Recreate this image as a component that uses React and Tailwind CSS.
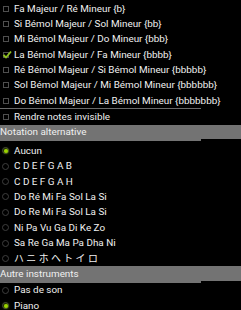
import React from 'react';

const keys = [
  { label: 'Fa Majeur / Ré Mineur {b}' },
  { label: 'Si Bémol Majeur / Sol Mineur {bb}' },
  { label: 'Mi Bémol Majeur / Do Mineur {bbb}' },
  { label: 'La Bémol Majeur / Fa Mineur {bbbb}', checked: true },
  { label: 'Ré Bémol Majeur / Si Bémol Mineur {bbbbb}' },
  { label: 'Sol Bémol Majeur / Mi Bémol Mineur {bbbbbb}' },
  { label: 'Do Bémol Majeur / La Bémol Mineur {bbbbbbb}' },
];

const notations = [
  { label: 'Aucun', selected: true },
  { label: 'C D E F G A B' },
  { label: 'C D E F G A H' },
  { label: 'Do Ré Mi Fa Sol La Si' },
  { label: 'Do Re Mi Fa Sol La Si' },
  { label: 'Ni Pa Vu Ga Di Ke Zo' },
  { label: 'Sa Re Ga Ma Pa Dha Ni' },
  { label: 'ハ ニ ホ ヘ ト イ ロ' },
];

const instruments = [
  { label: 'Pas de son' },
  { label: 'Piano', selected: true },
];

// petite case à cocher
const CheckRow = ({ label, checked }) => (
  <div className="flex items-center h-[15.33px]">
    <div className="relative w-[14px] h-full flex items-center">
      <div className="ml-[3px] w-[6px] h-[6px] border border-[#4f4f4f]" />
      {checked && (
        <svg className="absolute left-[2px] top-[3px]" width="10" height="9" viewBox="0 0 10 9">
          <path d="M1.5 5 L4 7.5 L9 1.5" stroke="#8fc31f" strokeWidth="1.8" fill="none" />
        </svg>
      )}
    </div>
    <span className="whitespace-nowrap">{label}</span>
  </div>
);

const RadioRow = ({ label, selected }) => (
  <div className="flex items-center h-[15.4px]">
    <div className="w-[14px] h-full flex items-center">
      <div className="ml-[2px] w-[7px] h-[7px] rounded-full border border-[#3f3f3f] flex items-center justify-center">
        {selected && <div className="w-[4px] h-[4px] rounded-full bg-[#9bd400] shadow-[0_0_3px_#9bd400]" />}
      </div>
    </div>
    <span className="whitespace-nowrap">{label}</span>
  </div>
);

const Header = ({ title }) => (
  <div>
    <div className="h-[14.5px] bg-[#737373] flex items-center whitespace-nowrap">{title}</div>
    <div className="h-[2px] w-[201px] bg-[#737373]" />
  </div>
);

export default function App() {
  return (
    <div
      className="w-[241px] h-[310px] overflow-hidden bg-black text-[#f0f0f0] text-[9.9px] leading-none"
      style={{ fontFamily: 'Roboto, "Noto Sans CJK JP", sans-serif' }}
    >
      <div className="pt-[1px]">
        {keys.map((k) => (
          <CheckRow key={k.label} {...k} />
        ))}
      </div>
      <div className="h-[1px] w-[201px] bg-[#6a6a6a]" />
      <CheckRow label="Rendre notes invisible" />
      <Header title="Notation alternative" />
      <div className="pt-[2px]">
        {notations.map((n) => (
          <RadioRow key={n.label} {...n} />
        ))}
      </div>
      <Header title="Autre instruments" />
      <div>
        {instruments.map((n) => (
          <RadioRow key={n.label} {...n} />
        ))}
      </div>
    </div>
  );
}
